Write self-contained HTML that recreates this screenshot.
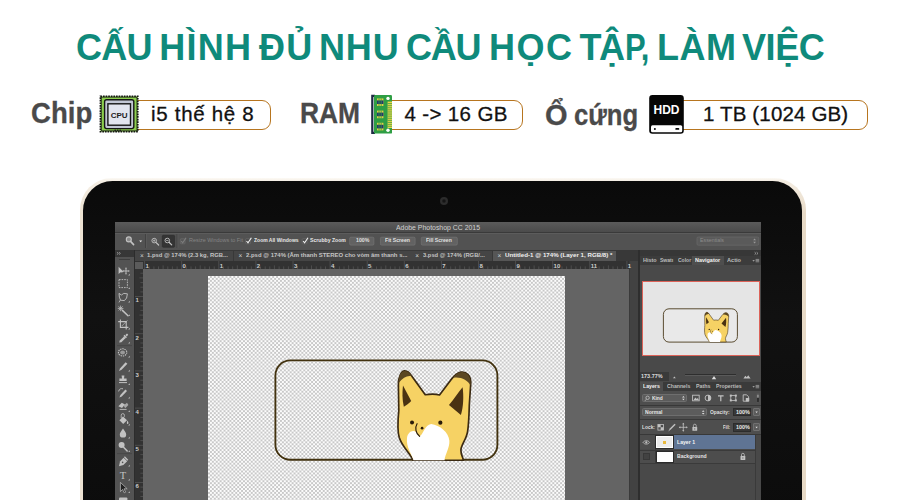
<!DOCTYPE html>
<html lang="vi">
<head>
<meta charset="utf-8">
<title>Cấu hình đủ nhu cầu học tập, làm việc</title>
<style>
*{margin:0;padding:0;box-sizing:border-box}
html,body{width:900px;height:500px;overflow:hidden;background:#fff}
body{position:relative;font-family:"Liberation Sans",sans-serif}
.abs{position:absolute}
.t{position:absolute;white-space:nowrap;line-height:1}
/* title */
.ttl{color:#0f8a7b;font-weight:bold;font-size:36px;top:30px}
/* spec labels */
.lab{color:#4a4a4a;font-weight:bold;font-size:29px;-webkit-text-stroke:.3px #4a4a4a}
.pill{position:absolute;top:99.900px;height:30.200px;border:1.25px solid #b7751f;border-radius:9px;background:#fff}
.val{color:#111;font-size:20.5px;top:104px;-webkit-text-stroke:.3px #111}
/* laptop */
#lap{position:absolute;left:80.2px;top:177.6px;width:725.8px;height:340px;border-radius:32px 32px 0 0;background:linear-gradient(rgba(253,251,247,.95),rgba(247,241,232,.8) 3px,rgba(247,241,232,0) 36px),linear-gradient(90deg,#ece2d2,#f1e9dd 45%,#e7dac7)}
#bez{position:absolute;left:2.4px;top:3.200px;right:3.5px;bottom:0;border-radius:29.5px 29.5px 0 0;background:linear-gradient(#0a0a0a,#111 40%,#0c0c0c)}
#scr{position:absolute;left:0;top:0;width:900px;height:500px;clip-path:inset(222px 139px 0 115px);font-size:7.5px;color:#d0d0d0}
#cam{position:absolute;left:440px;top:197.400px;width:7.800px;height:7.800px;border-radius:50%;background:radial-gradient(#141414 18%,#2d2d2d 42%,#272727)}
#cv{position:absolute;left:207.8px;top:275.8px;width:357.5px;height:225px;background:repeating-conic-gradient(#c8c8c8 0 25%,#fcfcfc 0 50%) 0 0/3.9px 3.9px}
#scr .t{font-weight:bold}
</style>
</head>
<body>

<!-- ===== Title ===== -->
<div class="t ttl" style="left:76px;letter-spacing:-0.75px">CẤU</div>
<div class="t ttl" style="left:159.3px;letter-spacing:1.2px">HÌNH</div>
<div class="t ttl" style="left:259px;letter-spacing:1.3px">ĐỦ</div>
<div class="t ttl" style="left:319px;letter-spacing:0.85px">NHU</div>
<div class="t ttl" style="left:406px;letter-spacing:-1.2px">CẦU</div>
<div class="t ttl" style="left:489px;letter-spacing:1.5px">HỌC</div>
<div class="t ttl" style="left:579.5px;letter-spacing:-2.6px">TẬ</div>
<div class="t ttl" style="left:624.6px;letter-spacing:-1px;transform:scaleX(.86);transform-origin:0 0">P,</div>
<div class="t ttl" style="left:657px;letter-spacing:0.45px">LÀM</div>
<div class="t ttl" style="left:742px;letter-spacing:-0.43px">VIỆC</div>

<!-- ===== Specs ===== -->
<div class="pill" style="left:120px;width:151px"></div>
<div class="pill" style="left:380px;width:143px"></div>
<div class="pill" style="left:665px;width:203px"></div>

<div class="t lab" style="left:31px;top:99px;transform:scaleX(.95);transform-origin:0 0">Chip</div>
<div class="t lab" style="left:300px;top:99px;transform:scaleX(.91);transform-origin:0 0">RAM</div>
<div class="t lab" style="left:545px;top:101px">Ổ</div>
<div class="t lab" style="left:574px;top:101px;transform:scaleX(.885);transform-origin:0 0">cứng</div>

<div class="t val" style="left:151px;letter-spacing:0.7px">i5 thế hệ 8</div>
<div class="t val" style="left:404.5px;letter-spacing:0.35px">4 -&gt; 16 GB</div>
<div class="t val" style="left:703px;letter-spacing:0.15px">1 TB (1024 GB)</div>

<!-- ===== Icons ===== -->
<svg class="abs" style="left:98px;top:94px" width="42" height="40" viewBox="98 94 42 40">
  <rect x="100.4" y="96.3" width="37.4" height="35.4" fill="#8ccf4d" stroke="#141414" stroke-width="1.6" stroke-dasharray="1.7 0.9"/>
  <rect x="101.3" y="97.2" width="35.6" height="33.6" fill="none" stroke="#1b1b1b" stroke-width=".7"/>
  <rect x="104.6" y="99.8" width="29.2" height="28.8" rx="2" fill="#c2c7d5" stroke="#161616" stroke-width="1.4"/>
  <rect x="107.9" y="103.8" width="22.6" height="21.4" fill="#e2e5ef" stroke="#161616" stroke-width="1.4"/>
  <text x="119.2" y="118.1" text-anchor="middle" font-family="Liberation Sans, sans-serif" font-weight="bold" font-size="8" fill="#222">CPU</text>
  <rect x="114.5" y="129.6" width="1.4" height="1.6" fill="#1b1b1b"/><rect x="117" y="129.6" width="1.4" height="1.6" fill="#1b1b1b"/><rect x="119.5" y="129.6" width="1.4" height="1.6" fill="#1b1b1b"/>
</svg>

<svg class="abs" style="left:370px;top:94px" width="24" height="41" viewBox="370 94 24 41">
  <path d="M375 95.8H372.3V132.8H375" fill="none" stroke="#1f2a44" stroke-width="2.2"/>
  <rect x="374" y="95" width="18" height="38.6" rx="1.2" fill="#2f9e44"/>
  <rect x="387.6" y="101.6" width="4.4" height="26.4" fill="#e9d44a"/>
  <g stroke="#2f9e44" stroke-width=".7">
    <path d="M387.6 103.5h4.4M387.6 105.4h4.4M387.6 107.3h4.4M387.6 109.2h4.4M387.6 111.1h4.4M387.6 113h4.4M387.6 114.9h4.4M387.6 116.8h4.4M387.6 118.7h4.4M387.6 120.6h4.4M387.6 122.5h4.4M387.6 124.4h4.4M387.6 126.3h4.4"/>
  </g>
  <circle cx="388" cy="98.4" r="1.7" fill="#fff"/><circle cx="388" cy="130.2" r="1.7" fill="#fff"/>
  <g>
    <rect x="377" y="98.4" width="6.4" height="7.6" fill="#e3cf45"/><rect x="377" y="100.4" width="6.4" height="3.6" fill="#27366b"/>
    <rect x="377" y="110.6" width="6.4" height="7.6" fill="#e3cf45"/><rect x="377" y="112.6" width="6.4" height="3.6" fill="#27366b"/>
    <rect x="377" y="122.8" width="6.4" height="7.6" fill="#e3cf45"/><rect x="377" y="124.8" width="6.4" height="3.6" fill="#27366b"/>
    <path d="M379 98.4v7.6M381.2 98.4v7.6M379 110.6v7.6M381.2 110.6v7.6M379 122.8v7.6M381.2 122.8v7.6" stroke="#2f9e44" stroke-width=".8"/>
  </g>
</svg>

<svg class="abs" style="left:648px;top:94px" width="37" height="41" viewBox="648 94 37 41">
  <rect x="649.2" y="95" width="34.6" height="38.7" rx="3.2" fill="#060606"/>
  <rect x="651" y="125.300" width="31.200" height="6.900" rx="1.500" fill="#fff"/>
  <circle cx="654.900" cy="128.900" r="1" fill="#060606"/><rect x="675.300" y="128.100" width="4" height="1.700" rx=".85" fill="#060606"/>
  <text x="666.5" y="113.8" text-anchor="middle" font-family="Liberation Sans, sans-serif" font-weight="bold" font-size="12" fill="#fff">HDD</text>
</svg>

<!-- ===== Laptop ===== -->
<div id="lap"><div id="bez"></div></div>
<div id="cam"></div>
<!--SCR-BEGIN-->
<div id="scr">
  <div class="abs" style="left:115px;top:222px;width:646px;height:10px;background:linear-gradient(#5b5b5b,#4b4b4b)"></div>
  <div class="abs" style="left:115px;top:232px;width:646px;height:18px;background:#525252;border-top:1px solid #3a3a3a;box-shadow:inset 0 1px 0 #5c5c5c"></div>
  <div class="abs" style="left:115px;top:250px;width:646px;height:11px;background:#383838"></div>
  <div class="abs" style="left:134.5px;top:250.5px;width:98.5px;height:10.5px;background:#454545"></div>
  <div class="abs" style="left:233.8px;top:250.5px;width:182px;height:10.5px;background:#454545"></div>
  <div class="abs" style="left:410.6px;top:250.5px;width:81.4px;height:10.5px;background:#454545"></div>
  <div class="abs" style="left:492.6px;top:250.5px;width:123.6px;height:10.5px;background:#565656"></div>
  <div class="abs" style="left:143px;top:269px;width:486px;height:231px;background:#646464"></div>
  <div id="cv"></div>
  <div class="abs" style="left:134px;top:260.5px;width:495px;height:8.7px;background:#323232"></div>
  <div class="abs" style="left:134px;top:261px;width:9.2px;height:239px;background:#323232"></div>
  <div class="abs" style="left:135px;top:261.6px;width:8px;height:7.4px;background:#5b5b5b"></div>
  <svg class="abs" style="left:0;top:0" width="900" height="500" viewBox="0 0 900 500"><path d="M144.6 261V269M181.7 261V269M218.8 261V269M255.9 261V269M293.0 261V269M330.1 261V269M367.2 261V269M404.3 261V269M441.4 261V269M478.5 261V269M515.6 261V269M552.7 261V269M589.8 261V269M626.9 261V269M149.2 266.4V269M153.9 266.4V269M158.5 266.4V269M163.1 265.4V269M167.8 266.4V269M172.4 266.4V269M177.1 266.4V269M186.3 266.4V269M191.0 266.4V269M195.6 266.4V269M200.2 265.4V269M204.9 266.4V269M209.5 266.4V269M214.2 266.4V269M223.4 266.4V269M228.1 266.4V269M232.7 266.4V269M237.3 265.4V269M242.0 266.4V269M246.6 266.4V269M251.3 266.4V269M260.5 266.4V269M265.2 266.4V269M269.8 266.4V269M274.4 265.4V269M279.1 266.4V269M283.7 266.4V269M288.4 266.4V269M297.6 266.4V269M302.3 266.4V269M306.9 266.4V269M311.5 265.4V269M316.2 266.4V269M320.8 266.4V269M325.5 266.4V269M334.7 266.4V269M339.4 266.4V269M344.0 266.4V269M348.6 265.4V269M353.3 266.4V269M357.9 266.4V269M362.6 266.4V269M371.8 266.4V269M376.5 266.4V269M381.1 266.4V269M385.8 265.4V269M390.4 266.4V269M395.0 266.4V269M399.7 266.4V269M408.9 266.4V269M413.6 266.4V269M418.2 266.4V269M422.9 265.4V269M427.5 266.4V269M432.1 266.4V269M436.8 266.4V269M446.0 266.4V269M450.7 266.4V269M455.3 266.4V269M459.9 265.4V269M464.6 266.4V269M469.2 266.4V269M473.9 266.4V269M483.1 266.4V269M487.8 266.4V269M492.4 266.4V269M497.1 265.4V269M501.7 266.4V269M506.3 266.4V269M511.0 266.4V269M520.2 266.4V269M524.9 266.4V269M529.5 266.4V269M534.1 265.4V269M538.8 266.4V269M543.4 266.4V269M548.1 266.4V269M557.3 266.4V269M562.0 266.4V269M566.6 266.4V269M571.2 265.4V269M575.9 266.4V269M580.5 266.4V269M585.2 266.4V269M594.4 266.4V269M599.1 266.4V269M603.7 266.4V269M608.4 265.4V269M613.0 266.4V269M617.6 266.4V269M622.3 266.4V269M134.5 296.5H143M134.5 333.7H143M134.5 370.9H143M134.5 408.1H143M134.5 445.3H143M134.5 482.5H143M140.4 273.2H143M139.4 277.9H143M140.4 282.6H143M140.4 287.2H143M140.4 291.9H143M140.4 301.1H143M140.4 305.8H143M140.4 310.4H143M139.4 315.1H143M140.4 319.8H143M140.4 324.4H143M140.4 329.1H143M140.4 338.4H143M140.4 343.0H143M140.4 347.6H143M139.4 352.3H143M140.4 356.9H143M140.4 361.6H143M140.4 366.2H143M140.4 375.6H143M140.4 380.2H143M140.4 384.9H143M139.4 389.5H143M140.4 394.1H143M140.4 398.8H143M140.4 403.4H143M140.4 412.8H143M140.4 417.4H143M140.4 422.1H143M139.4 426.7H143M140.4 431.4H143M140.4 436.0H143M140.4 440.6H143M140.4 450.0H143M140.4 454.6H143M140.4 459.2H143M139.4 463.9H143M140.4 468.6H143M140.4 473.2H143M140.4 477.9H143M140.4 487.1H143M140.4 491.8H143M140.4 496.5H143" stroke="#545454" stroke-width=".8" fill="none"/></svg>
  <div class="abs" style="left:115px;top:250px;width:18.6px;height:250px;background:#535353"></div>
  <div class="abs" style="left:115px;top:250px;width:18.6px;height:6.5px;background:#373737"></div>
  <div class="abs" style="left:133.6px;top:250px;width:1.2px;height:250px;background:#2c2c2c"></div>
  <div class="abs" style="left:118.5px;top:259px;width:11px;height:1.2px;background:#3e3e3e"></div>
  <div class="abs" style="left:629px;top:261px;width:8.8px;height:239px;background:#424242;border-left:1px solid #3a3a3a"></div>
  <div class="abs" style="left:637.6px;top:250px;width:123.4px;height:250px;background:#494949;border-left:2px solid #2e2e2e"></div>
  <div class="abs" style="left:639.6px;top:250px;width:121.4px;height:6px;background:#373737"></div>
  <div class="abs" style="left:639.6px;top:256px;width:121.4px;height:9px;background:#3c3c3c"></div>
  <div class="abs" style="left:692.2px;top:256.4px;width:31.9px;height:8.6px;background:#4e4e4e"></div>
  <div class="abs" style="left:641.5px;top:281.3px;width:118.4px;height:74.3px;background:#e5e5e5;border:.8px solid #dc6258"></div>
  <div class="abs" style="left:639.6px;top:372px;width:29px;height:9px;background:#3a3a3a"></div>
  <div class="abs" style="left:684.8px;top:374px;width:51px;height:1px;background:#2e2e2e;box-shadow:0 1px 0 #5a5a5a"></div>
  <div class="abs" style="left:639.6px;top:381.8px;width:121.4px;height:9.4px;background:#3a3a3a"></div>
  <div class="abs" style="left:640.4px;top:382.2px;width:22.4px;height:9px;background:#4e4e4e"></div>
  <div class="abs" style="left:639.6px;top:391.2px;width:121.4px;height:43.4px;background:#4e4e4e"></div>
  <div class="abs" style="left:642px;top:394px;width:45.2px;height:8.2px;background:#5c5c5c;border:1px solid #6e6e6e;border-radius:1.5px"></div>
  <div class="abs" style="left:642px;top:408.3px;width:64.9px;height:7.9px;background:#5c5c5c;border:1px solid #6e6e6e;border-radius:1.5px"></div>
  <div class="abs" style="left:732.8px;top:408px;width:18.6px;height:8.4px;background:#383838;border:1px solid #2c2c2c"></div>
  <div class="abs" style="left:753px;top:408.2px;width:6.8px;height:8px;background:#5c5c5c;border:1px solid #707070;border-radius:1px"></div>
  <div class="abs" style="left:732.8px;top:423.2px;width:18.6px;height:8.4px;background:#383838;border:1px solid #2c2c2c"></div>
  <div class="abs" style="left:753px;top:423.4px;width:6.8px;height:8px;background:#5c5c5c;border:1px solid #707070;border-radius:1px"></div>
  <div class="abs" style="left:639.6px;top:404.6px;width:121.4px;height:0.8px;background:#383838"></div>
  <div class="abs" style="left:639.6px;top:419.4px;width:121.4px;height:0.8px;background:#383838"></div>
  <div class="abs" style="left:639.6px;top:434.4px;width:121.4px;height:0.8px;background:#383838"></div>
  <div class="abs" style="left:639.6px;top:435.2px;width:15.6px;height:14px;background:#4d4d4d"></div>
  <div class="abs" style="left:655.2px;top:435.2px;width:99.7px;height:14px;background:#5f7494"></div>
  <div class="abs" style="left:639.6px;top:449.6px;width:115.3px;height:14px;background:#4d4d4d;border-top:1px solid #3a3a3a;border-bottom:1px solid #3a3a3a"></div>
  <div class="abs" style="left:655px;top:435.2px;width:0.8px;height:28.4px;background:#3a3a3a"></div>
  <div class="abs" style="left:754.9px;top:435.2px;width:6.1px;height:65px;background:#484848;border-left:1px solid #3a3a3a"></div>
  <div class="abs" style="left:656.4px;top:436.4px;width:16.8px;height:12px;background:#ececec;border:1px solid #fff;outline:1px solid #2b2b2b;outline-offset:0"></div>
  <div class="abs" style="left:663.3px;top:441.2px;width:2.4px;height:2.6px;background:#e8b93c"></div>
  <div class="abs" style="left:656.9px;top:452px;width:15.8px;height:9.8px;background:#fff;outline:1px solid #2b2b2b"></div>
  <div class="abs" style="left:643.2px;top:453.2px;width:6.5px;height:7.3px;background:#424242;border:1px solid #383838"></div>
  <!--ART-->
  <svg class="abs" style="left:0;top:0" width="900" height="500" viewBox="0 0 900 500">
    <defs><g id="fox"><path d="M109 468C100 440 58 405 44 360C34 325 38 270 42 230L40 112C38 70 55 40 72 42C84 43 92 50 100 62L168 156C190 152 215 151 236 157L290 85C305 66 320 52 337 48C365 43 386 68 385 100L378 205C377 245 376 290 370 330C364 370 338 395 338 420C338 440 346 452 350 468Z" fill="#f6d264" stroke="#3b2a12" stroke-width="8" stroke-linejoin="round"/>
<path d="M41 100C40 65 55 41 72 43C86 44 95 54 104 68C85 62 62 72 41 100Z" fill="#5b4722"/>
<path d="M300 75C312 60 326 50 338 49C365 45 385 68 384 100L383 112C372 85 335 68 300 75Z" fill="#5b4722"/>
<path d="M62 112L101 186C90 198 78 207 66 213C58 180 58 145 62 112Z" fill="#4a3212"/>
<path d="M346 120C352 160 350 215 338 252L281 205C305 175 326 145 346 120Z" fill="#4a3212"/>
<path d="M112 468C104 440 76 405 81 362C84 338 102 324 118 330C128 334 130 348 142 353C158 345 166 298 196 295C238 300 280 335 283 375C285 410 262 440 260 468Z" fill="#fff"/>
<circle cx="105" cy="288" r="9.5" fill="#2a1c0a"/><circle cx="240" cy="289" r="10" fill="#2a1c0a"/>
<circle cx="153" cy="315" r="6.5" fill="#2a1c0a"/>
<path d="M129 294C118 312 122 340 141 354" fill="none" stroke="#2a1c0a" stroke-width="5.5" stroke-linecap="round"/></g></defs>
    <rect x="275.4" y="360.4" width="222" height="99.3" rx="15" fill="none" stroke="#42320f" stroke-width="1.85"/>
    <svg x="390" y="362" width="90" height="105" viewBox="0 0 429 500"><use href="#fox"/></svg>
    <rect x="663.4" y="308.8" width="74" height="33.3" rx="5.6" fill="#e9e9e9" stroke="#4a3a1c" stroke-width=".9"/>
    <svg x="701.9" y="309.3" width="29.9" height="34.9" viewBox="0 0 429 500"><use href="#fox"/></svg>
  </svg>
  <!--/ART-->
  <!--ICONS-->
  <svg class="abs" style="left:0;top:0" width="900" height="500" viewBox="0 0 900 500">
    <circle cx="128.8" cy="239.4" r="2.5" fill="#8a8a8a" stroke="#c2c2c2" stroke-width="1.1"/><path d="M130.6 241.4L133.6 244.6" stroke="#c2c2c2" stroke-width="1.6" stroke-linecap="round"/>
    <path d="M139.2 240.4h3l-1.5 1.9z" fill="#e8e8e8"/>
    <path d="M145.5 234V248" stroke="#424242" stroke-width="1"/><path d="M146.5 234V248" stroke="#5c5c5c" stroke-width=".8"/>
    <circle cx="154.2" cy="240.6" r="2.3" fill="none" stroke="#c2c2c2" stroke-width=".9"/><path d="M155.9 242.4L158.6 245" stroke="#c2c2c2" stroke-width="1.2" stroke-linecap="round"/><path d="M153 240.6h2.400M154.200 239.400v2.400" stroke="#c2c2c2" stroke-width=".7"/>
    <rect x="162.300" y="235.300" width="12.300" height="12" rx="1" fill="#343434" stroke="#2c2c2c" stroke-width=".6"/>
    <circle cx="167.300" cy="240.500" r="2.300" fill="none" stroke="#c2c2c2" stroke-width=".9"/><path d="M169 242.300L171.700 244.900" stroke="#c2c2c2" stroke-width="1.200" stroke-linecap="round"/><path d="M166.100 240.500h2.400" stroke="#c2c2c2" stroke-width=".7"/>
    <path d="M177 234V248" stroke="#424242" stroke-width="1"/><path d="M178 234V248" stroke="#5c5c5c" stroke-width=".8"/>
    <rect x="180.3" y="238.800" width="4.800" height="5" rx=".6" fill="#565656" stroke="#727272" stroke-width=".6"/><path d="M181.20000000000002 241l1.500 1.900l3.400-5.200" fill="none" stroke="#7d7d7d" stroke-width="1.100"/>
    <rect x="245.6" y="238.800" width="4.800" height="5" rx=".6" fill="#4a4a4a" stroke="#727272" stroke-width=".6"/><path d="M246.5 241l1.500 1.900l3.400-5.200" fill="none" stroke="#f0f0f0" stroke-width="1.100"/>
    <rect x="302.2" y="238.800" width="4.800" height="5" rx=".6" fill="#4a4a4a" stroke="#727272" stroke-width=".6"/><path d="M303.09999999999997 241l1.500 1.900l3.400-5.200" fill="none" stroke="#f0f0f0" stroke-width="1.100"/>
    <rect x="349.7" y="237.2" width="24.2" height="7.9" rx="1.2" fill="#626262" stroke="#747474" stroke-width=".7"/>
    <rect x="380.4" y="237.2" width="34.7" height="7.9" rx="1.2" fill="#626262" stroke="#747474" stroke-width=".7"/>
    <rect x="421.3" y="237.2" width="36" height="7.9" rx="1.2" fill="#626262" stroke="#747474" stroke-width=".7"/>
    <rect x="697" y="237" width="61.7" height="8.2" rx="1.2" fill="#5a5a5a" stroke="#6a6a6a" stroke-width=".7"/><path d="M753.2 240.2l1.4-1.6l1.4 1.6zM753.2 241.8l1.4 1.6l1.4-1.6z" fill="#9a9a9a"/>
    <path d="M117 252.2l1.4 1.2l-1.4 1.2M119 252.2l1.4 1.2l-1.4 1.2" fill="none" stroke="#c2c2c2" stroke-width=".6"/>
    <path d="M118.6 266.8v7.2l2-1.8l1.6 .2l1-1z" fill="#c2c2c2"/><path d="M126 268.2v5.6M123.2 271h5.6" stroke="#c2c2c2" stroke-width=".9"/><path d="M126 267.2l1 1.4h-2zM126 274.8l1-1.4h-2zM122.2 271l1.4-1v2zM129.8 271l-1.4-1v2z" fill="#c2c2c2"/><path d="M128.2 275.4h1.6v-1.6z" fill="#bdbdbd"/>
    <rect x="119" y="279.6" width="8.4" height="8" fill="none" stroke="#c2c2c2" stroke-width=".9" stroke-dasharray="1.6 1"/><path d="M128.2 288.9h1.6v-1.6z" fill="#bdbdbd"/>
    <path d="M119 293.4l2.4 1.6l2.4-1.6l3.6 .4l-.8 4.2l-2.2 2.6l-3.8-.4l-1.2-3z" fill="none" stroke="#c2c2c2" stroke-width=".9"/><path d="M120.4 300l-1.4 2.4" stroke="#c2c2c2" stroke-width=".8"/><path d="M128.2 302.4h1.6v-1.6z" fill="#bdbdbd"/>
    <path d="M122.4 310.4l5.6 5.4" stroke="#c2c2c2" stroke-width="1.5" stroke-linecap="round"/><path d="M120.6 305.6v5.6M117.8 308.4h5.6M118.6 306.4l4 4M122.6 306.4l-4 4" stroke="#c2c2c2" stroke-width=".8"/><path d="M128.2 315.9h1.6v-1.6z" fill="#bdbdbd"/>
    <path d="M120.4 319.4v8h8M118.2 321.6h8v8" fill="none" stroke="#c2c2c2" stroke-width="1.1"/><path d="M127.4 320.4l-5.6 5.6" stroke="#c2c2c2" stroke-width=".7"/><path d="M128.2 329.4h1.6v-1.6z" fill="#bdbdbd"/>
    <path d="M119.2 342.6l.6-2l4.2-4.2l1.6 1.6l-4.2 4.2z" fill="#c2c2c2"/><path d="M124 335.4l2.4 2.4" stroke="#c2c2c2" stroke-width="1.6"/><path d="M125.4 335l1.6-1.4l1.2 1.2l-1.4 1.6z" fill="#c2c2c2"/><path d="M128.2 343.4h1.6v-1.6z" fill="#bdbdbd"/>
    <path d="M117 345.6h15" stroke="#444" stroke-width=".7"/>
    <ellipse cx="122.6" cy="352.4" rx="4.2" ry="3.6" fill="none" stroke="#c2c2c2" stroke-width="1.1" stroke-dasharray="1.4 .8"/><ellipse cx="122.6" cy="352.4" rx="2.4" ry="2" fill="#9a9a9a"/><path d="M128.2 357.4h1.6v-1.6z" fill="#bdbdbd"/>
    <path d="M119 371l1-2.6l5.6-6.2l1.8 1.6l-5.8 6z" fill="#c2c2c2"/><path d="M128.2 371.4h1.6v-1.6z" fill="#bdbdbd"/>
    <path d="M121.6 375.4h2.8l-.4 3.2h2.6v2.4h-7.2v-2.4h2.6z" fill="#c2c2c2"/><path d="M119 382.6h8" stroke="#c2c2c2" stroke-width="1"/><path d="M128.2 384.9h1.6v-1.6z" fill="#bdbdbd"/>
    <path d="M119.4 397.4l1-2.4l5-5.4l1.6 1.4l-5.2 5.4z" fill="#c2c2c2"/><path d="M118.6 391.4a3.6 3.6 0 0 1 4.4-2.6" fill="none" stroke="#c2c2c2" stroke-width=".9"/><path d="M128.2 398.4h1.6v-1.6z" fill="#bdbdbd"/>
    <path d="M118.4 406.2l3.4-3.4l3.2 1.6l-3 3.6z" fill="#c2c2c2"/><path d="M123.6 405.6l3.4-2.8l1.4 2.2l-3.2 3.2z" fill="#a8a8a8"/><path d="M119.6 409.4h7" stroke="#c2c2c2" stroke-width=".9"/><path d="M128.2 411.9h1.6v-1.6z" fill="#bdbdbd"/>
    <path d="M119.4 420.2l3.6-3.8l4 3.8l-3.8 3.8z" fill="#c2c2c2"/><path d="M121.2 418v-2.8a1.6 1.6 0 0 1 3.2 0v1.6" fill="none" stroke="#c2c2c2" stroke-width=".8"/><path d="M127.4 420.6c1 1.6 1.4 2.4 .6 3.4c-1 .4-1.600-.4-.6-3.4z" fill="#c2c2c2"/><path d="M128.2 425.4h1.6v-1.6z" fill="#bdbdbd"/>
    <path d="M123 428.4c2 2.800 3.200 4.400 3.200 6a3.200 3.200 0 0 1-6.400 0c0-1.600 1.200-3.200 3.200-6z" fill="#c2c2c2"/><path d="M128.2 438.4h1.6v-1.6z" fill="#bdbdbd"/>
    <circle cx="121.6" cy="445" r="3" fill="#c2c2c2"/><path d="M123.8 447.4l3.400 3.600" stroke="#c2c2c2" stroke-width="1.5" stroke-linecap="round"/><path d="M128.2 451.9h1.6v-1.6z" fill="#bdbdbd"/>
    <path d="M117 453.600h15" stroke="#444" stroke-width=".7"/>
    <path d="M119 466.200l1-4.600l3.600-3.800l3.600 3.400l-3.800 3.800z" fill="#c2c2c2"/><path d="M124.400 456.800l3.400 3.400" stroke="#c2c2c2" stroke-width="1.300"/><circle cx="122.600" cy="462.400" r=".8" fill="#535353"/><path d="M128.2 466.4h1.6v-1.6z" fill="#bdbdbd"/>
    <text x="123" y="478.600" text-anchor="middle" font-family="Liberation Serif, serif" font-size="10.500" fill="#c2c2c2">T</text><path d="M128.2 480.4h1.6v-1.6z" fill="#bdbdbd"/>
    <path d="M120.400 482.400v9.200l2.200-2.200l1.600 3.400l1.400-.6l-1.600-3.400h3.200z" fill="#222" stroke="#c2c2c2" stroke-width=".7"/><path d="M128.2 492.9h1.6v-1.6z" fill="#bdbdbd"/>
    <rect x="119" y="497.400" width="8.400" height="4" rx="1" fill="#c2c2c2"/>
    <path d="M754.600 252.200l1.400 1.200l-1.400 1.200M756.600 252.200l1.400 1.200l-1.400 1.200" fill="none" stroke="#c2c2c2" stroke-width=".6"/>
    <path d="M752.400 260.2l1.200 1.400l1.200-1.400z" fill="#bdbdbd"/><path d="M755.600 259.4h3.600M755.600 260.59999999999997h3.600M755.600 261.8h3.600" stroke="#bdbdbd" stroke-width=".6"/>
    <path d="M752.400 386.2l1.200 1.400l1.200-1.400z" fill="#bdbdbd"/><path d="M755.600 385.4h3.600M755.600 386.59999999999997h3.600M755.600 387.8h3.600" stroke="#bdbdbd" stroke-width=".6"/>
    <path d="M673 378.200l1.400-1.600l1.400 1.600z" fill="#c2c2c2"/><path d="M743.400 378.400l2-2.600l1.400 1.400l1.400-2l2.400 3.200z" fill="#c2c2c2"/><path d="M711.800 379.200l2.200-3.200l2.200 3.200z" fill="#e0e0e0"/>
    <circle cx="647.600" cy="397.800" r="1.700" fill="none" stroke="#c2c2c2" stroke-width=".8"/><path d="M646.400 399.200l-1.400 1.600" stroke="#c2c2c2" stroke-width=".8"/>
    <path d="M682.1 397.5l1.300-1.500l1.300 1.500zM682.1 398.70000000000005l1.300 1.500l1.300-1.500z" fill="#e0e0e0"/>
    <path d="M701.9000000000001 411.7l1.300-1.500l1.300 1.500zM701.9000000000001 412.90000000000003l1.300 1.500l1.300-1.500z" fill="#e0e0e0"/>
    <rect x="692.600" y="395.200" width="6.600" height="5.600" fill="none" stroke="#c2c2c2" stroke-width=".9"/><path d="M693.600 400l1.800-2.400l1.400 1.400l1-1l1 2z" fill="#c2c2c2"/>
    <circle cx="708" cy="398" r="2.900" fill="none" stroke="#c2c2c2" stroke-width=".9"/><path d="M708 395.100a2.900 2.900 0 0 1 0 5.800z" fill="#c2c2c2"/>
    <path d="M718 395.200h5.600v1.200h-2.200v4.800h-1.200v-4.800h-2.200z" fill="#c2c2c2"/>
    <rect x="730.800" y="395.600" width="5" height="4.800" fill="none" stroke="#c2c2c2" stroke-width=".8"/><rect x="729.800" y="394.600" width="2" height="2" fill="#c2c2c2"/><rect x="734.800" y="394.600" width="2" height="2" fill="#c2c2c2"/><rect x="729.800" y="399.400" width="2" height="2" fill="#c2c2c2"/><rect x="734.800" y="399.400" width="2" height="2" fill="#c2c2c2"/>
    <path d="M743.200 394.800h3.400l2 2v4.400h-5.400z" fill="none" stroke="#c2c2c2" stroke-width=".9"/><rect x="745.800" y="398" width="3.400" height="3.400" fill="#c2c2c2"/>
    <rect x="756.400" y="394" width="3" height="8.400" rx=".6" fill="#2e2e2e" stroke="#6a6a6a" stroke-width=".5"/><rect x="756.900" y="394.500" width="2" height="3.200" fill="#8a8a8a"/>
    <path d="M755.400 411.600h2.400l-1.200 1.500zM755.400 426.800h2.400l-1.200 1.500z" fill="#e0e0e0"/>
    <rect x="657.900" y="424.500" width="5.600" height="5.600" fill="none" stroke="#c2c2c2" stroke-width=".8"/><path d="M657.900 424.500h2.800v2.800h-2.800zM660.700 427.300h2.800v2.800h-2.800z" fill="#c2c2c2"/>
    <path d="M668.800 430.600l1-2.200l4.800-4.600l1 1l-4.800 4.800z" fill="#c2c2c2"/><path d="M668.600 430.800c.8-.2 1.400-.6 1.600-1.400" stroke="#c2c2c2" stroke-width=".8"/>
    <path d="M683.300 423.600v7.400M679.600 427.300h7.400" stroke="#c2c2c2" stroke-width=".8"/><path d="M683.300 422.800l1.100 1.500h-2.200zM683.300 431.800l1.100-1.500h-2.200zM678.800 427.300l1.500-1.100v2.200zM687.800 427.300l-1.500-1.100v2.200z" fill="#c2c2c2"/>
    <rect x="692.4" y="427.0" width="4.800" height="3.800" rx=".5" fill="#c2c2c2"/><path d="M693.4 427.0v-1.400a1.400 1.400 0 0 1 2.800 0v1.400" fill="none" stroke="#c2c2c2" stroke-width=".8"/><rect x="694.4" y="428.2" width=".8" height="1.400" fill="#555"/>
    <rect x="740.5" y="456.1" width="4.800" height="3.800" rx=".5" fill="#c2c2c2"/><path d="M741.5 456.1v-1.400a1.400 1.400 0 0 1 2.800 0v1.400" fill="none" stroke="#c2c2c2" stroke-width=".8"/><rect x="742.5" y="457.3" width=".8" height="1.400" fill="#555"/>
    <path d="M643 442.400c1.600-2.300 5-2.300 6.600 0c-1.600 2.300-5 2.300-6.600 0z" fill="none" stroke="#c2c2c2" stroke-width=".8"/><circle cx="646.300" cy="442.400" r="1.100" fill="#c2c2c2"/>
  </svg>
  <!--/ICONS-->
  <div class="t" style="left:396.4px;top:224.61px;font-size:6.6px;color:#d2d2d2;font-weight:normal;transform:scaleX(1.046);transform-origin:0 0">Adobe Photoshop CC 2015</div>
  <div class="t" style="left:189.0px;top:238.09px;font-size:5.8px;color:#858585;font-weight:normal;transform:scaleX(0.940);transform-origin:0 0">Resize Windows to Fit</div>
  <div class="t" style="left:254.1px;top:238.09px;font-size:5.8px;color:#e6e6e6;transform:scaleX(0.865);transform-origin:0 0">Zoom All Windows</div>
  <div class="t" style="left:310.2px;top:238.09px;font-size:5.8px;color:#e6e6e6;transform:scaleX(0.884);transform-origin:0 0">Scrubby Zoom</div>
  <div class="t" style="left:355.6px;top:238.49px;font-size:5.8px;color:#e0e0e0;transform:scaleX(0.897);transform-origin:0 0">100%</div>
  <div class="t" style="left:385.2px;top:238.49px;font-size:5.8px;color:#e0e0e0;transform:scaleX(0.888);transform-origin:0 0">Fit Screen</div>
  <div class="t" style="left:426.2px;top:238.49px;font-size:5.8px;color:#e0e0e0;transform:scaleX(0.880);transform-origin:0 0">Fill Screen</div>
  <div class="t" style="left:700.0px;top:238.49px;font-size:5.8px;color:#8c8c8c;font-weight:normal;transform:scaleX(0.908);transform-origin:0 0">Essentials</div>
  <div class="t" style="left:146.9px;top:253.09px;font-size:5.8px;color:#c4c4c4;transform:scaleX(1.014);transform-origin:0 0">1.psd @ 174% (2.3 kg, RGB...</div>
  <div class="t" style="left:245.6px;top:253.09px;font-size:5.8px;color:#c4c4c4;transform:scaleX(1.028);transform-origin:0 0">2.psd @ 174% (Âm thanh STEREO cho vòm âm thanh s...</div>
  <div class="t" style="left:423.1px;top:253.09px;font-size:5.8px;color:#c4c4c4;transform:scaleX(1.001);transform-origin:0 0">3.psd @ 174% (RGB/...</div>
  <div class="t" style="left:505.0px;top:253.09px;font-size:5.8px;color:#f0f0f0;transform:scaleX(1.064);transform-origin:0 0">Untitled-1 @ 174% (Layer 1, RGB/8) *</div>
  <div class="t" style="left:139.9px;top:252.60px;font-size:6.5px;color:#cfcfcf;font-weight:normal">×</div>
  <div class="t" style="left:238.5px;top:252.60px;font-size:6.5px;color:#cfcfcf;font-weight:normal">×</div>
  <div class="t" style="left:415.2px;top:252.60px;font-size:6.5px;color:#cfcfcf;font-weight:normal">×</div>
  <div class="t" style="left:497.4px;top:252.60px;font-size:6.5px;color:#cfcfcf;font-weight:normal">×</div>
  <div class="t" style="left:642.8px;top:258.09px;font-size:5.8px;color:#bdbdbd;transform:scaleX(0.938);transform-origin:0 0">Histo</div>
  <div class="t" style="left:660.3px;top:258.09px;font-size:5.8px;color:#bdbdbd;transform:scaleX(0.872);transform-origin:0 0">Swatı</div>
  <div class="t" style="left:677.9px;top:258.09px;font-size:5.8px;color:#bdbdbd;transform:scaleX(0.865);transform-origin:0 0">Color</div>
  <div class="t" style="left:695.3px;top:258.09px;font-size:5.8px;color:#f2f2f2;transform:scaleX(0.942);transform-origin:0 0">Navigator</div>
  <div class="t" style="left:727.2px;top:258.09px;font-size:5.8px;color:#bdbdbd;transform:scaleX(0.966);transform-origin:0 0">Actio</div>
  <div class="t" style="left:640.8px;top:373.69px;font-size:5.8px;color:#dcdcdc;transform:scaleX(0.944);transform-origin:0 0">173.77%</div>
  <div class="t" style="left:643.2px;top:383.69px;font-size:5.8px;color:#f2f2f2;transform:scaleX(0.898);transform-origin:0 0">Layers</div>
  <div class="t" style="left:667.2px;top:383.69px;font-size:5.8px;color:#bdbdbd;transform:scaleX(0.893);transform-origin:0 0">Channels</div>
  <div class="t" style="left:696.0px;top:383.69px;font-size:5.8px;color:#bdbdbd;transform:scaleX(0.918);transform-origin:0 0">Paths</div>
  <div class="t" style="left:716.0px;top:383.69px;font-size:5.8px;color:#bdbdbd;transform:scaleX(0.896);transform-origin:0 0">Properties</div>
  <div class="t" style="left:651.9px;top:396.19px;font-size:5.8px;color:#e4e4e4;transform:scaleX(0.838);transform-origin:0 0">Kind</div>
  <div class="t" style="left:644.9px;top:409.69px;font-size:5.8px;color:#e4e4e4;transform:scaleX(0.876);transform-origin:0 0">Normal</div>
  <div class="t" style="left:710.0px;top:409.69px;font-size:5.8px;color:#dedede;transform:scaleX(0.849);transform-origin:0 0">Opacity:</div>
  <div class="t" style="left:735.7px;top:409.89px;font-size:5.8px;color:#e8e8e8;transform:scaleX(0.937);transform-origin:0 0">100%</div>
  <div class="t" style="left:641.5px;top:424.79px;font-size:5.8px;color:#dedede;transform:scaleX(0.840);transform-origin:0 0">Lock:</div>
  <div class="t" style="left:722.5px;top:424.79px;font-size:5.8px;color:#dedede;transform:scaleX(0.698);transform-origin:0 0">Fill:</div>
  <div class="t" style="left:735.7px;top:424.99px;font-size:5.8px;color:#e8e8e8;transform:scaleX(0.937);transform-origin:0 0">100%</div>
  <div class="t" style="left:676.8px;top:439.99px;font-size:5.8px;color:#f4f4f4;transform:scaleX(0.886);transform-origin:0 0">Layer 1</div>
  <div class="t" style="left:676.8px;top:454.29px;font-size:5.8px;color:#e4e4e4;transform:scaleX(0.875);transform-origin:0 0">Background</div>
  <div class="t" style="left:145.5px;top:263.32px;font-size:6px;color:#cdcdcd">1</div>
  <div class="t" style="left:182.6px;top:263.32px;font-size:6px;color:#cdcdcd">0</div>
  <div class="t" style="left:219.7px;top:263.32px;font-size:6px;color:#cdcdcd">1</div>
  <div class="t" style="left:256.8px;top:263.32px;font-size:6px;color:#cdcdcd">2</div>
  <div class="t" style="left:293.9px;top:263.32px;font-size:6px;color:#cdcdcd">3</div>
  <div class="t" style="left:331.0px;top:263.32px;font-size:6px;color:#cdcdcd">4</div>
  <div class="t" style="left:368.1px;top:263.32px;font-size:6px;color:#cdcdcd">5</div>
  <div class="t" style="left:405.2px;top:263.32px;font-size:6px;color:#cdcdcd">6</div>
  <div class="t" style="left:442.3px;top:263.32px;font-size:6px;color:#cdcdcd">7</div>
  <div class="t" style="left:479.4px;top:263.32px;font-size:6px;color:#cdcdcd">8</div>
  <div class="t" style="left:516.5px;top:263.32px;font-size:6px;color:#cdcdcd">9</div>
  <div class="t" style="left:553.6px;top:263.32px;font-size:6px;color:#cdcdcd">10</div>
  <div class="t" style="left:590.7px;top:263.32px;font-size:6px;color:#cdcdcd">11</div>
  <div class="t" style="left:627.8px;top:263.32px;font-size:6px;color:#cdcdcd">1</div>
  <div class="t" style="left:135.4px;top:297.42px;font-size:6px;color:#cdcdcd">1</div>
  <div class="t" style="left:135.4px;top:334.62px;font-size:6px;color:#cdcdcd">2</div>
  <div class="t" style="left:135.4px;top:371.82px;font-size:6px;color:#cdcdcd">3</div>
  <div class="t" style="left:135.4px;top:409.02px;font-size:6px;color:#cdcdcd">4</div>
  <div class="t" style="left:135.4px;top:446.22px;font-size:6px;color:#cdcdcd">5</div>
  <div class="t" style="left:135.4px;top:483.42px;font-size:6px;color:#cdcdcd">6</div>
</div>
<!--SCR-END-->

</body>
</html>
